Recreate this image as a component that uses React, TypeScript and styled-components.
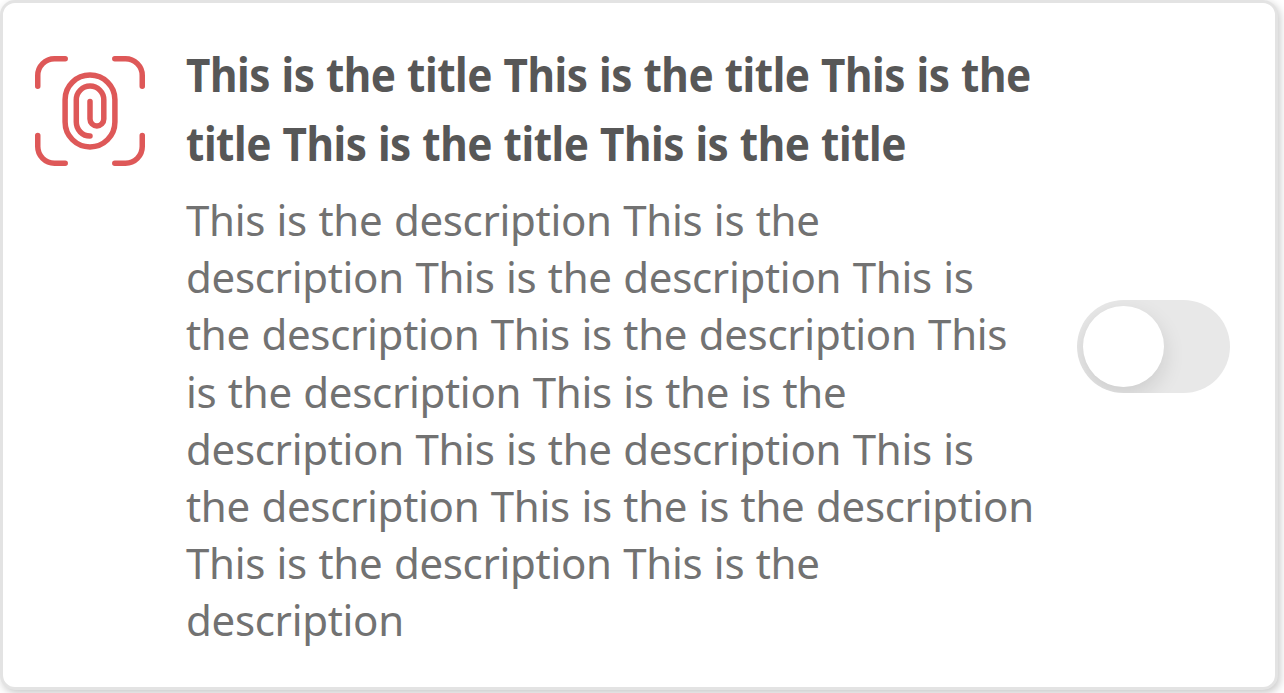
import React, { useState } from "react";
import styled, { createGlobalStyle } from "styled-components";

const GlobalStyle = createGlobalStyle`
  * { box-sizing: border-box; }
  body { margin: 0; min-height: 693px; background: #fff; overflow: hidden; font-family: "Noto Sans", sans-serif; }
`;

const Card = styled.article`
  display: flex;
  width: 1278px;
  height: 690px;
  padding: 37px 45px 37px 32px;
  border: 3px solid #e3e3e3;
  border-radius: 15px;
  background: #fff;
  box-shadow: 2px 3px 8px rgba(0, 0, 0, 0.22);
`;

const Icon = styled.svg`
  flex: none;
  width: 110px;
  height: 110px;
  margin: 16px 41px 0 0;
  fill: none;
  stroke: #de5858;
  stroke-width: 5.5;
  stroke-linecap: round;
`;

const Content = styled.div`
  width: 890px;
  flex: none;
`;

const Title = styled.h2`
  margin: 0 0 13px;
  color: #575757;
  font-size: 46px;
  font-weight: 700;
  line-height: 69px;
  word-spacing: 1px;
  transform: scaleX(0.92);
  transform-origin: left;
`;

const Description = styled.p`
  margin: 0;
  color: #727272;
  font-size: 42px;
  line-height: 57.2px;
  word-spacing: 0.9px;
`;

const Line = styled.span<{ $spacing: number }>`
  display: block;
  white-space: nowrap;
  letter-spacing: ${(p) => p.$spacing}px;
`;

const Track = styled.button<{ $on: boolean }>`
  display: flex;
  flex: none;
  align-self: center;
  justify-content: ${(p) => (p.$on ? "flex-end" : "flex-start")};
  width: 153px;
  height: 93px;
  margin: 3px 0 0 auto;
  padding: 6px;
  border: 0;
  border-radius: 47px;
  overflow: hidden;
  background: ${(p) => (p.$on ? "#de5858" : "#e8e8e8")};
`;

const Knob = styled.span`
  width: 81px;
  height: 81px;
  border-radius: 50%;
  background: #fff;
  box-shadow: 0 8px 22px rgba(0, 0, 0, 0.12);
`;

const titleLines = [
  "This is the title This is the title This is the",
  "title This is the title This is the title",
];

const descriptionLines = [
  "This is the description This is the",
  "description This is the description This is",
  "the description This is the description This",
  "is the description This is the is the",
  "description This is the description This is",
  "the description This is the is the description",
  "This is the description This is the",
  "description",
];

function FingerprintIcon() {
  return (
    <Icon viewBox="35 56 110 110" aria-hidden="true">
      <path d="M37.75 86.3V75.5a16.75 16.75 0 0 1 16.75-16.75H65.2" />
      <path d="M114.8 58.75h10.7a16.75 16.75 0 0 1 16.75 16.75V86.3" />
      <path d="M142.25 135.6v10.9a16.75 16.75 0 0 1-16.75 16.75H114.8" />
      <path d="M65.2 163.25H54.5A16.75 16.75 0 0 1 37.75 146.5V135.6" />
      <path d="M65.1 99.5a24.9 24.5 0 0 1 49.8 0V122a24.9 24.9 0 0 1-49.8 0Z" />
      <path d="M90 136C82.4 136 76.3 129.9 76.3 122V99.8a13.75 13.75 0 0 1 27.5 0V119a6.9 6.9 0 0 1-13.8 0V101.4" />
    </Icon>
  );
}

export default function App() {
  const [on, setOn] = useState(false);
  return (
    <>
      <GlobalStyle />
      <Card>
        <FingerprintIcon />
        <Content>
          <Title>
            {titleLines.map((t, i) => (
              <Line key={i} $spacing={-0.5}>{t}</Line>
            ))}
          </Title>
          <Description>
            {descriptionLines.map((t, i) => (
              <Line key={i} $spacing={-0.3}>{t}</Line>
            ))}
          </Description>
        </Content>
        <Track $on={on} role="switch" aria-checked={on} aria-label="Toggle" onClick={() => setOn(!on)}>
          <Knob />
        </Track>
      </Card>
    </>
  );
}
